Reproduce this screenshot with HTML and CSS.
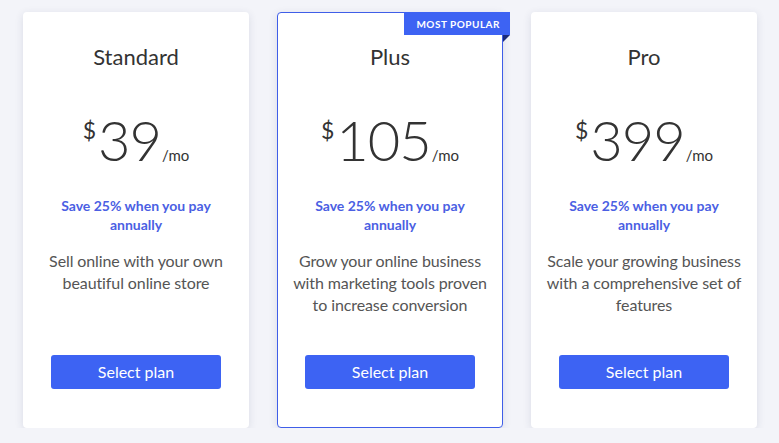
FILE: index.html
```html
<!DOCTYPE html>
<html>
<head>
<meta charset="utf-8">
<link rel="stylesheet" href="styles.css">
</head>
<body>
<div class="plans">
  <div class="card">
    <h2 class="title">Standard</h2>
    <div class="price"><span class="cur">$</span><span class="amt">39</span><span class="per">/mo</span></div>
    <p class="save">Save 25% when you pay annually</p>
    <p class="desc">Sell online with your own beautiful online store</p>
    <button class="btn">Select plan</button>
  </div>
  <div class="card featured">
    <div class="badge">MOST POPULAR</div>
    <h2 class="title">Plus</h2>
    <div class="price"><span class="cur">$</span><span class="amt">105</span><span class="per">/mo</span></div>
    <p class="save">Save 25% when you pay annually</p>
    <p class="desc">Grow your online business with marketing tools proven to increase conversion</p>
    <button class="btn">Select plan</button>
  </div>
  <div class="card">
    <h2 class="title">Pro</h2>
    <div class="price"><span class="cur">$</span><span class="amt">399</span><span class="per">/mo</span></div>
    <p class="save">Save 25% when you pay annually</p>
    <p class="desc">Scale your growing business with a comprehensive set of features</p>
    <button class="btn">Select plan</button>
  </div>
</div>
</body>
</html>
```
FILE: styles.css
```css
html, body {
  margin: 0;
  padding: 0;
  background: #f3f4f9;
  font-family: "Lato", "Open Sans", sans-serif;
}
.plans {
  display: flex;
  gap: 28px;
  padding: 12px 0 0 23px;
}
.card {
  position: relative;
  box-sizing: border-box;
  width: 226px;
  height: 416px;
  background: #fff;
  border: 1px solid transparent;
  border-radius: 4px;
  box-shadow: 0 2px 8px rgba(40, 50, 90, 0.12);
  display: flex;
  flex-direction: column;
  align-items: center;
  text-align: center;
  padding: 30px 11px 38px;
}
.card.featured {
  border-color: #3f5ee8;
}
.badge {
  position: absolute;
  top: -1px;
  right: -8px;
  background: #3d63f3;
  color: #fff;
  font-size: 10px;
  font-weight: 700;
  letter-spacing: 0.5px;
  padding: 6px 10px 5px 12px;
  line-height: 12px;
}
.badge::after {
  content: "";
  position: absolute;
  right: 0;
  bottom: -7px;
  border-top: 7px solid #1b2a7a;
  border-right: 7px solid transparent;
}
.title {
  margin: 0;
  font-size: 22px;
  font-weight: 400;
  color: #333;
  line-height: 28px;
}
.price {
  margin-top: 32px;
  display: flex;
  align-items: flex-start;
  color: #333;
  height: 74px;
}
.cur {
  font-size: 23px;
  font-weight: 400;
  margin-top: 13px;
  margin-right: 2px;
}
.amt {
  font-size: 56px;
  font-weight: 300;
  line-height: 74px;
  letter-spacing: -1px;
}
.per {
  font-size: 15px;
  align-self: flex-end;
  margin-bottom: 13px;
  margin-left: 1px;
}
.save {
  margin: 19px 0 0;
  font-size: 14px;
  font-weight: 700;
  color: #4b5fe3;
  line-height: 19px;
}
.desc {
  margin: 16px 0 0;
  font-size: 16px;
  color: #555;
  line-height: 22px;
  letter-spacing: -0.1px;
}
.btn {
  margin-top: auto;
  width: 170px;
  height: 34px;
  border: none;
  border-radius: 3px;
  background: #3d63f3;
  color: #fff;
  font-family: inherit;
  font-size: 16px;
  padding-bottom: 2px;
}
```
